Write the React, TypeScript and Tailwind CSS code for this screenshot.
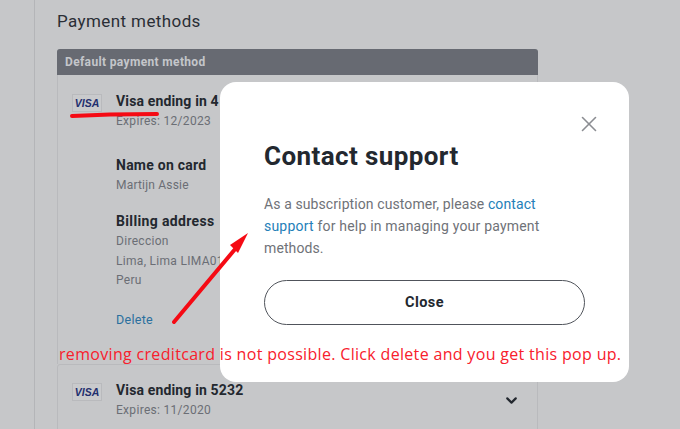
import { ChevronDown, X } from 'lucide-react';

function VisaBadge() {
  return (
    <div className="flex h-[18px] w-[30px] items-center justify-center border border-[#b9babd] bg-[#c9cacc] font-['Liberation_Sans',sans-serif] text-[10.5px] font-bold italic leading-none text-[#1f2f6e]">
      VISA
    </div>
  );
}

function CardHead({ title, expires }: { title: string; expires: string }) {
  return (
    <div className="flex gap-[14px]">
      <div className="pt-[3px]">
        <VisaBadge />
      </div>
      <div>
        <p className="text-[14px] font-bold leading-[20px] tracking-[0.15px] text-[#23282f]">{title}</p>
        <p className="text-[12px] leading-[20px] tracking-[0.3px] text-[#6b6e75]">{expires}</p>
      </div>
    </div>
  );
}

export default function App() {
  return (
    <div className="relative h-[429px] w-[680px] overflow-hidden bg-[#c6c7c9] font-['Roboto',sans-serif]">
      <div className="ml-[34px] h-full w-[505px] border-l border-[#b4b5b8] pl-[22px]">
        <h1 className="pt-[10px] text-[17px] leading-[22px] tracking-[0.4px] text-[#2a2e35]">Payment methods</h1>
        <div className="mt-[17px] h-[315px] w-[481px] rounded-t-[3px] border border-b-0 border-[#b9babd]">
          <div className="-mx-px -mt-px flex h-[26px] items-center rounded-t-[3px] bg-[#676a72] px-[8px] text-[12px] font-bold tracking-[0.35px] text-[#c4c6ca]">
            Default payment method
          </div>
          <div className="pl-[14px] pt-[16px]">
            <CardHead title="Visa ending in 4" expires="Expires: 12/2023" />
            <div className="ml-[44px] mt-[24px]">
              <p className="text-[14px] font-bold leading-[20px] tracking-[0.25px] text-[#23282f]">Name on card</p>
              <p className="text-[12px] leading-[20px] tracking-[0.2px] text-[#6b6e75]">Martijn Assie</p>
              <p className="mt-[16px] text-[14px] font-bold leading-[20px] tracking-[0.35px] text-[#23282f]">Billing address</p>
              <div className="mt-px text-[12px] leading-[19.5px] tracking-[0.3px] text-[#6b6e75]">
                <p>Direccion</p>
                <p>Lima, Lima LIMA01</p>
                <p>Peru</p>
              </div>
              <p className="mt-[19px] text-[12.5px] leading-[20px] tracking-[0.3px] text-[#2a6f9e]">Delete</p>
            </div>
          </div>
        </div>
        <div className="flex h-[80px] w-[481px] justify-between rounded-t-[3px] border border-[#b9babd] pl-[14px] pr-[17px] pt-[15px]">
          <CardHead title="Visa ending in 5232" expires="Expires: 11/2020" />
          <ChevronDown className="mt-[12px] size-[17px] text-[#23282f]" strokeWidth={3} />
        </div>
      </div>

      {/* modal */}
      <div className="absolute left-[220px] top-[82px] h-[300px] w-[409px] rounded-[16px] bg-white px-[44px] pt-[58px]">
        <X className="absolute left-[356px] top-[29px] size-[26px] text-[#8b8d92]" strokeWidth={1.5} />
        <h2 className="text-[26px] font-bold leading-[32px] tracking-[0.4px] text-[#23282f]">Contact support</h2>
        <div className="mt-[21px] text-[14px] leading-[22px] text-[#6f7278]">
          <p className="tracking-[0.1px]">As a subscription customer, please <span className="text-[#2480b8]">contact</span></p>
          <p className="tracking-[0.2px]"><span className="text-[#2480b8]">support</span> for help in managing your payment</p>
          <p className="tracking-[0.1px]">methods.</p>
        </div>
        <button className="mt-[21px] flex h-[45px] w-[321px] items-center justify-center rounded-full border border-[#50545b] text-[14.5px] font-bold tracking-[0.4px] text-[#23282f]">
          Close
        </button>
      </div>

      {/* annotations added on the screenshot */}
      <svg className="absolute left-0 top-0" width="680" height="429" viewBox="0 0 680 429" fill="none">
        <path d="M72 116 L110 114.5 L157 114" stroke="#f50a14" strokeWidth="4" strokeLinecap="round" />
        <path d="M174 322 L236 248" stroke="#f50a14" strokeWidth="4" strokeLinecap="round" />
        <path d="M248 233 L230 245 L238 253 Z" fill="#f50a14" />
      </svg>
      <p className="absolute left-[59px] top-[344px] whitespace-nowrap font-['Open_Sans',sans-serif] text-[16px] leading-[20px] tracking-[0.32px] text-[#f8202c]">
        removing creditcard is not possible. Click delete and you get this pop up.
      </p>
    </div>
  );
}
